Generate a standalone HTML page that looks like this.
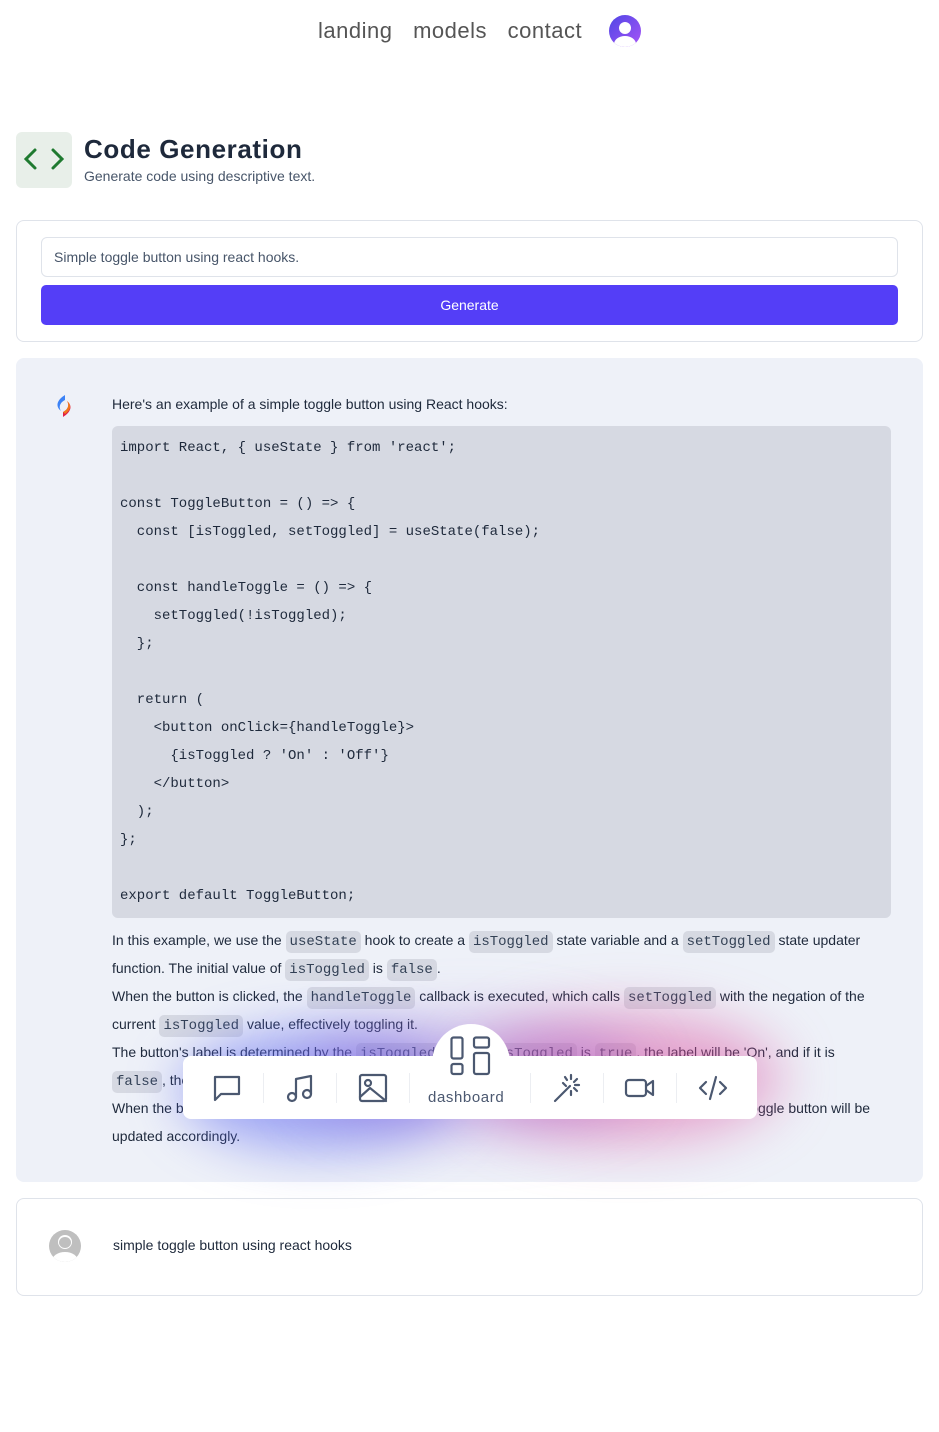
<!DOCTYPE html>
<html><head><meta charset="utf-8"><style>
*{margin:0;padding:0;box-sizing:border-box}
body{width:939px;height:1432px;background:#fff;font-family:"Liberation Sans",sans-serif;position:relative;overflow:hidden;color:#334155}
.abs{position:absolute}
.nav{top:18px;left:318px;font-size:22px;color:#555;letter-spacing:0.5px;font-weight:300}
.nav span{margin-right:14px}
.mono{font-family:"Liberation Mono",monospace}
code{font-family:"Liberation Mono",monospace;font-size:14px;line-height:14px;background:#d6d9e2;border-radius:5px;padding:3px 4px;color:#334155}
.p{font-size:14px;line-height:28px;color:#1e293b}
.ic{stroke:#4b5870;fill:none;stroke-width:2.2;stroke-linecap:round;stroke-linejoin:round}
.sep{position:absolute;top:1073px;width:1px;height:30px;background:#eceef2}
</style></head><body>
<div class="abs nav"><span>landing</span> <span>models</span> <span>contact</span></div>
<div class="abs" style="left:609px;top:15px;width:32px;height:32px;border-radius:50%;background:linear-gradient(135deg,#4f46e5,#a855f7);overflow:hidden">
 <div class="abs" style="left:10px;top:7px;width:12px;height:12px;border-radius:50%;background:#fff"></div>
 <div class="abs" style="left:5px;top:21px;width:22px;height:16px;border-radius:50%;background:#fff"></div>
</div>

<div class="abs" style="left:16px;top:132px;width:56px;height:56px;border-radius:6px;background:#e8efe9">
<svg width="56" height="56" viewBox="0 0 56 56"><path d="M19 18 L10 27 L19 36 M37 18 L46 27 L37 36" stroke="#1f7a30" stroke-width="3" fill="none" stroke-linecap="round"/></svg></div>
<div class="abs" style="left:84px;top:134px;font-size:26px;font-weight:bold;color:#1e293b;letter-spacing:0.6px">Code Generation</div>
<div class="abs" style="left:84px;top:168px;font-size:14px;color:#475569">Generate code using descriptive text.</div>

<div class="abs" style="left:16px;top:220px;width:907px;height:122px;border:1px solid #dfe3ea;border-radius:8px"></div>
<div class="abs" style="left:41px;top:237px;width:857px;height:40px;border:1px solid #dfe3ea;border-radius:6px;font-size:14px;color:#475569;padding:11px 12px">Simple toggle button using react hooks.</div>
<div class="abs" style="left:41px;top:285px;width:857px;height:40px;background:#543ef7;border-radius:5px;color:#fff;font-size:14px;text-align:center;line-height:40px">Generate</div>

<div class="abs" style="left:16px;top:358px;width:907px;height:824px;background:#eef1f8;border-radius:8px"></div>
<svg class="abs" style="left:53px;top:394px" width="22" height="24" viewBox="0 0 22 24"><path d="M12 1 C4 6 2 12 8 17 C5 12 8 8 12 6Z" fill="#3b82f6"/><path d="M10 23 C18 18 20 12 14 7 C17 12 14 16 10 18Z" fill="#e11d48"/><path d="M14 7 C17 12 14 16 10 18 L12 20 C18 16 19 11 14 7Z" fill="#f59e0b" opacity=".7"/></svg>
<div class="abs p" style="left:112px;top:390px">Here's an example of a simple toggle button using React hooks:</div>
<pre class="abs mono" style="left:112px;top:426px;width:779px;height:492px;background:#d6d9e2;border-radius:6px;padding:8px 8px;font-size:14px;line-height:28px;color:#1e293b">import React, { useState } from 'react';

const ToggleButton = () =&gt; {
  const [isToggled, setToggled] = useState(false);

  const handleToggle = () =&gt; {
    setToggled(!isToggled);
  };

  return (
    &lt;button onClick={handleToggle}&gt;
      {isToggled ? 'On' : 'Off'}
    &lt;/button&gt;
  );
};

export default ToggleButton;</pre>
<div class="abs p" style="left:112px;top:926px;width:775px">In this example, we use the <code>useState</code> hook to create a <code>isToggled</code> state variable and a <code>setToggled</code> state updater function. The initial value of <code>isToggled</code> is <code>false</code>.<br>When the button is clicked, the <code>handleToggle</code> callback is executed, which calls <code>setToggled</code> with the negation of the current <code>isToggled</code> value, effectively toggling it.<br>The button's label is determined by the <code>isToggled</code> state. If <code>isToggled</code> is <code>true</code>, the label will be 'On', and if it is <code>false</code>, the label will be 'Off'.<br>When the button is clicked, the state is toggled, and the label displayed on the rendered version of the toggle button will be updated accordingly.</div>

<!-- glow -->
<div class="abs" style="left:180px;top:1030px;width:280px;height:120px;border-radius:50%;background:rgba(90,100,240,.55);filter:blur(26px)"></div>
<div class="abs" style="left:470px;top:1015px;width:310px;height:125px;border-radius:50%;background:rgba(220,80,160,.5);filter:blur(28px)"></div>
<div class="abs" style="left:300px;top:1020px;width:340px;height:110px;border-radius:50%;background:rgba(150,100,210,.4);filter:blur(28px)"></div>

<div class="abs" style="left:183px;top:1056px;width:574px;height:63px;background:#fff;border-radius:8px"></div>
<div class="abs" style="left:432px;top:1024px;width:78px;height:70px;background:#fff;border-radius:39px 39px 0 0"></div>
<svg class="abs" style="left:449px;top:1035px" width="42" height="42" viewBox="0 0 42 42"><g class="ic" stroke-width="3"><rect x="2.5" y="2.5" width="11" height="21" rx="2"/><rect x="2.5" y="29" width="11" height="10" rx="2"/><rect x="25" y="2.5" width="15" height="10" rx="2"/><rect x="25" y="18" width="15" height="21" rx="2"/></g></svg>
<div class="abs" style="left:428px;top:1089px;font-size:15px;color:#4b5870;letter-spacing:0.6px">dashboard</div>

<svg class="abs" style="left:212px;top:1073px" width="30" height="30" viewBox="0 0 30 30"><path class="ic" d="M3 4h24v17H9l-6 6z"/></svg>
<div class="sep" style="left:263px"></div>
<svg class="abs" style="left:285px;top:1073px" width="30" height="30" viewBox="0 0 30 30"><g class="ic"><circle cx="7" cy="24" r="4"/><circle cx="22" cy="21" r="4"/><path d="M11 24V6l15-3v18"/></g></svg>
<div class="sep" style="left:336px"></div>
<svg class="abs" style="left:358px;top:1073px" width="30" height="30" viewBox="0 0 30 30"><g class="ic"><rect x="2" y="2" width="26" height="26" rx="2"/><circle cx="10" cy="10" r="3"/><path d="M2 24l10-9 16 13"/></g></svg>
<div class="sep" style="left:409px"></div>
<div class="sep" style="left:530px"></div>
<svg class="abs" style="left:553px;top:1073px" width="30" height="30" viewBox="0 0 30 30"><g class="ic"><path d="M2 28L17 13"/><path d="M18 2v4M18 18v4M10 10l3 3M24 6l-3 3M26 12h-4M12 4l2 3M24 18l-3-3"/></g></svg>
<div class="sep" style="left:603px"></div>
<svg class="abs" style="left:624px;top:1073px" width="32" height="30" viewBox="0 0 32 30"><g class="ic"><rect x="2" y="7" width="20" height="16" rx="3"/><path d="M22 13l7-5v14l-7-5"/></g></svg>
<div class="sep" style="left:676px"></div>
<svg class="abs" style="left:697px;top:1073px" width="32" height="30" viewBox="0 0 32 30"><path class="ic" d="M9 9l-6 6 6 6M23 9l6 6-6 6M19 4l-6 22"/></svg>

<div class="abs" style="left:16px;top:1198px;width:907px;height:98px;border:1px solid #dfe3ea;border-radius:8px"></div>
<div class="abs" style="left:49px;top:1230px;width:32px;height:32px;border-radius:50%;background:#bfbfbf;overflow:hidden">
 <div class="abs" style="left:9px;top:5px;width:14px;height:14px;border-radius:50%;background:#fff"></div>
 <div class="abs" style="left:3px;top:22px;width:26px;height:18px;border-radius:50%;background:#fff"></div>
 <div class="abs" style="left:10px;top:7px;width:12px;height:11px;border-radius:50%;background:#bfbfbf"></div>
</div>
<div class="abs" style="left:113px;top:1237px;font-size:14px;color:#1e293b">simple toggle button using react hooks</div>
</body></html>
